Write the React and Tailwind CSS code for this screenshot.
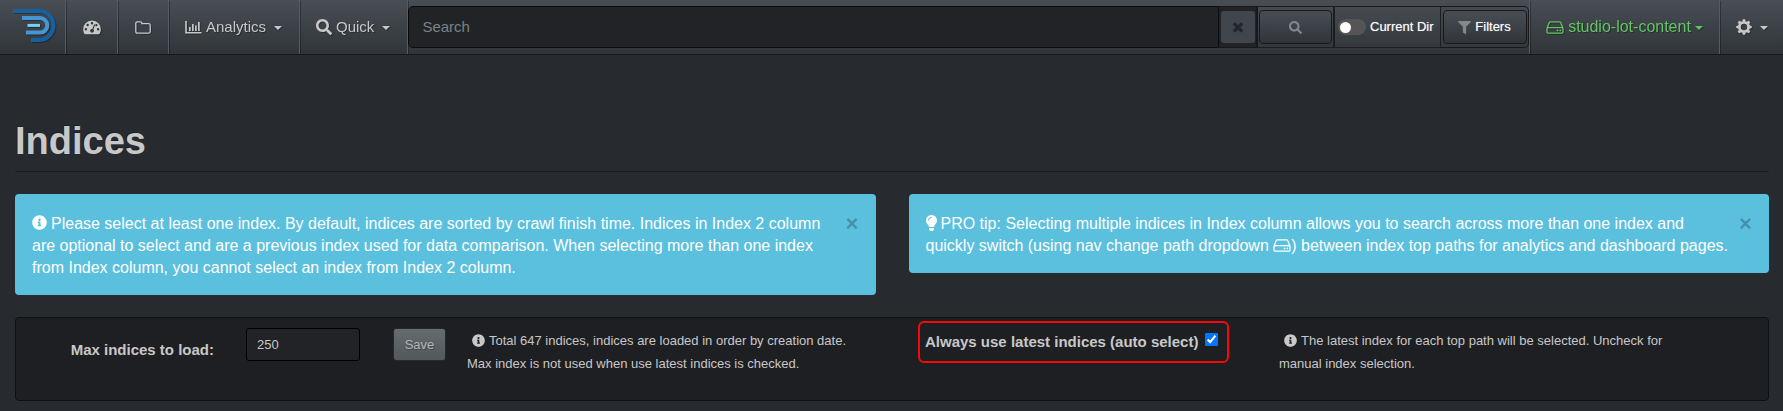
import { FaSearch, FaFilter, FaInfoCircle, FaLightbulb, FaTimes } from 'react-icons/fa';

function Logo() {
  return (
    <svg viewBox="0 0 44 35" className="h-[35px] w-[44px]" fill="none" aria-hidden="true">
      <path d="M0 3H26a14.5 14.5 0 0 1 0 29H18" stroke="#1660a0" strokeWidth="4" />
      <path d="M9 10H27a7.3 7.3 0 0 1 0 14.6H13" stroke="#4596d4" strokeWidth="4" />
      <path d="M14.500 17.400H27" stroke="#78cef8" strokeWidth="3" />
    </svg>
  );
}

function GaugeIcon() {
  return (
    <svg viewBox="0 0 18 15" className="h-[15px] w-[18px]" aria-hidden="true">
      <path
        fill="currentColor"
        fillRule="evenodd"
        d="M9 .5a8.800 8.800 0 0 1 8.800 8.800c0 1.700-.4 3.200-1.200 4.500-.2.300-.4.400-.7.400H2.100c-.3 0-.5-.1-.7-.4A8.800 8.800 0 0 1 .2 9.300 8.800 8.800 0 0 1 9 .5zM9 2a1.200 1.200 0 1 0 0 2.400A1.200 1.200 0 0 0 9 2zM4.700 3.800a1.200 1.200 0 1 0 0 2.400 1.200 1.200 0 0 0 0-2.400zM2.900 8.100a1.200 1.200 0 1 0 0 2.400 1.200 1.200 0 0 0 0-2.400zM15.100 8.100a1.200 1.200 0 1 0 0 2.400 1.200 1.200 0 0 0 0-2.400zM13.400 3.900a1.200 1.200 0 0 0-1.200 1.200 1.200 1.200 0 0 0 1.600 1.100 1.200 1.200 0 0 0-.4-2.300zM11.100 4.500l-1.700 4.600a2 2 0 0 0-2.300 1.700 2 2 0 0 0 3.900.5 2 2 0 0 0-.6-1.800l1.700-4.700z"
      />
    </svg>
  );
}

function FolderIcon() {
  return (
    <svg viewBox="0 0 16 13" className="h-[13px] w-[16px]" fill="none" stroke="currentColor" strokeWidth="1.300" aria-hidden="true">
      <path d="M.8 2.300A1.500 1.500 0 0 1 2.300.8h3a1.500 1.500 0 0 1 1.500 1.500v.4h6.900a1.500 1.500 0 0 1 1.500 1.500v6.500a1.500 1.500 0 0 1-1.500 1.500H2.300a1.500 1.500 0 0 1-1.500-1.500z" />
    </svg>
  );
}

function ChartIcon() {
  return (
    <svg viewBox="0 0 17 13" className="h-[13px] w-[17px]" fill="currentColor" aria-hidden="true">
      <path d="M.2 0h1.600v11h14.700v1.600H.2zM4 6h1.700v4H4zM7 3h1.700v7H7zM10 4.500h1.700V10H10zM13 1h1.700v9H13z" />
    </svg>
  );
}

function DriveIcon({ className = '' }) {
  return (
    <svg viewBox="0 0 18 13" className={`h-[13px] w-[18px] ${className}`} fill="none" aria-hidden="true">
      <path
        stroke="currentColor"
        strokeWidth="1.300"
        strokeLinejoin="round"
        d="M1 7.200 3.300 1.600Q3.600.8 4.500.8h9q.9 0 1.200.8L17 7.200v3.700q0 1.200-1.200 1.200H2.200Q1 12.100 1 10.900zM1.100 7.200q.3-.6 1.100-.6h13.600q.8 0 1.100.6"
      />
      <circle cx="11.500" cy="9.400" r=".9" fill="currentColor" />
      <circle cx="14.300" cy="9.400" r=".9" fill="currentColor" />
    </svg>
  );
}

function GearIcon() {
  return (
    <svg viewBox="-8 -8 16 16" className="h-[16px] w-[16px]" aria-hidden="true">
      <circle r="4.600" fill="none" stroke="currentColor" strokeWidth="2.800" />
      <g fill="currentColor">
        {[0, 45, 90, 135, 180, 225, 270, 315].map((angle) => (
          <path key={angle} transform={`rotate(${angle})`} d="M-1.800-5.200-1.100-7.700H1.100L1.800-5.200z" />
        ))}
      </g>
    </svg>
  );
}

function Caret() {
  return <span aria-hidden="true" className="mt-[2px] border-x-4 border-t-4 border-x-transparent border-t-current" />;
}

const navItem =
  'flex items-center border-r border-[#565b61] text-[#c8c8c8] [filter:drop-shadow(1px_1px_0_rgba(0,0,0,0.3))]';
const navGradient = 'bg-linear-to-b from-[#484e55] via-[#3a3f44] via-60% to-[#313539]';

function Navbar() {
  return (
    <nav className={`flex h-[55px] border-b border-[#17191b] text-[15px] ${navGradient}`}>
      <a href="#home" aria-label="Home" className={`${navItem} w-[66px] pb-1 pl-[13px]`}>
        <Logo />
      </a>
      <a href="#dashboard" aria-label="Dashboard" className={`${navItem} w-[52px] justify-center`}>
        <GaugeIcon />
      </a>
      <a href="#files" aria-label="Files" className={`${navItem} w-[51px] justify-center`}>
        <FolderIcon />
      </a>
      <button type="button" className={`${navItem} gap-1 pr-[17px] pl-4`}>
        <ChartIcon />
        <span className="pr-1">Analytics</span>
        <Caret />
      </button>
      <button type="button" className={`${navItem} gap-1 pr-[17px] pl-4`}>
        <FaSearch className="h-4 w-4" />
        <span className="pr-1">Quick</span>
        <Caret />
      </button>
      <form className="my-[6px] flex min-w-0 flex-1" onSubmit={(e) => e.preventDefault()}>
        <input
          type="text"
          aria-label="Search"
          placeholder="Search"
          className="min-w-0 flex-1 rounded-l-[5px] border border-[#0b0c0d] bg-[#222326] px-[13px] text-[15px] text-[#c8c8c8] placeholder:text-[#7a8288]"
        />
        <div className="flex w-[39px] items-center justify-center border-y border-r-2 border-[#17191b] bg-[#222326]">
          <button type="button" aria-label="Clear search" className="flex h-[32px] w-[34px] items-center justify-center rounded-[3px] bg-[#41464c] text-[#24272a]">
            <FaTimes className="h-[13px] w-[12px]" stroke="currentColor" strokeWidth="40" />
          </button>
        </div>
        <div className="flex w-[77px] items-center justify-center border-y border-r-2 border-[#1c1e20]">
          <button type="submit" aria-label="Search" className={`flex h-[34px] w-[73px] items-center justify-center rounded-[4px] border border-[#17191b] text-[13px] text-[#85888b] ${navGradient}`}>
            <FaSearch />
          </button>
        </div>
        <label className="flex w-[106px] items-center gap-1 border-y border-r border-[#1c1e20] pl-[3px] text-[13px] whitespace-nowrap text-white [text-shadow:0_0_1px_rgba(255,255,255,0.5)]">
          <span className="relative flex items-center">
            <input type="checkbox" className="peer h-[16px] w-[28px] appearance-none rounded-full bg-[#555]" />
            <span className="pointer-events-none absolute left-[2px] h-[11px] w-[11px] rounded-full bg-white peer-checked:left-[15px]" />
          </span>
          Current Dir
        </label>
        <div className="flex w-[88px] items-center justify-center rounded-r-[5px] border-y border-r border-[#17191b]">
          <button type="button" className={`flex h-[34px] w-[84px] items-center justify-center gap-1 rounded-[4px] border border-[#17191b] text-[13px] text-white [text-shadow:0_0_1px_rgba(255,255,255,0.5)] ${navGradient}`}>
            <FaFilter className="text-[#85888b]" />
            Filters
          </button>
        </div>
      </form>
      <button type="button" className="flex w-[191px] items-center justify-center gap-1 border-x border-[#565b61] text-[16px] text-[#62c462] [filter:drop-shadow(1px_1px_0_rgba(0,0,0,0.3))]">
        <DriveIcon />
        <span>studio-lot-content</span>
        <Caret />
      </button>
      <button type="button" aria-label="Settings" className="flex w-[63px] items-center justify-center gap-2 text-[#c8c8c8] [filter:drop-shadow(1px_1px_0_rgba(0,0,0,0.3))]">
        <GearIcon />
        <Caret />
      </button>
    </nav>
  );
}

function Alert({ children }) {
  return (
    <div role="alert" className="flex items-start justify-between gap-2 rounded-[4px] bg-[#5bc0de] px-[17px] pt-[19px] pb-[16px] text-[16px] leading-[22px] text-white">
      <p>{children}</p>
      <button type="button" aria-label="Close" className="w-[13px] shrink-0 text-center text-[22px] leading-[22px] font-bold text-black/25">
        ×
      </button>
    </div>
  );
}

export default function App() {
  return (
    <div className="min-h-screen bg-[#272b30] font-['Liberation_Sans',Arial,sans-serif] text-[#c8c8c8]">
      <Navbar />
      <main className="pt-[64px] pr-[14px] pl-[15px]">
        <h1 className="border-b border-[#1c1e20] pb-[8px] text-[38px] leading-[44px] font-bold [text-shadow:-1px_-1px_0_rgba(0,0,0,0.3)]">
          Indices
        </h1>
        <div className="mt-[22px] grid grid-cols-2 items-start gap-[33px]">
          <Alert>
            <FaInfoCircle className="mr-1 inline h-[15px] w-[15px] align-[-1px]" />
            Please select at least one index. By default, indices are sorted by crawl finish time. Indices in Index 2
            column are optional to select and are a previous index used for data comparison. When selecting more than
            one index from Index column, you cannot select an index from Index 2 column.
          </Alert>
          <Alert>
            <FaLightbulb className="mr-1 inline h-[16px] w-[11px] align-[-2px]" />
            PRO tip: Selecting multiple indices in Index column allows you to search across more than one index and
            <br />
            quickly switch (using nav change path dropdown <DriveIcon className="inline align-[-1px]" />) between index
            top paths for analytics and dashboard pages.
          </Alert>
        </div>
        <section className="mt-[22px] grid h-[84px] grid-cols-[3fr_2fr_1fr_6fr_5fr_7fr] items-start rounded-[4px] border border-[#0e1012] bg-[#1e1f23] text-[13px] leading-[23px]">
          <label htmlFor="max-indices" className="pt-[20px] pr-[21px] text-right text-[15px] font-bold">
            Max indices to load:
          </label>
          <div className="pt-[10px] pl-[11px]">
            <input
              id="max-indices"
              type="text"
              defaultValue="250"
              className="h-[33px] w-[114px] rounded-[3px] border border-black bg-[#222326] px-[10px] text-[13px]"
            />
          </div>
          <div className="pt-[10px] pl-[12px]">
            <button type="button" className="h-[33px] w-[53px] rounded-[3px] border border-[#27292d] bg-linear-to-b from-[#666b70] to-[#53585d] text-[13px] text-[#b4b6b8] [text-shadow:1px_1px_1px_rgba(0,0,0,0.3)]">
              Save
            </button>
          </div>
          <p className="pt-[11px] pr-8 pl-[13px]">
            <FaInfoCircle className="mr-1 ml-[5px] inline align-[-2px]" />
            Total 647 indices, indices are loaded in order by creation date. Max index is not used when use latest
            indices is checked.
          </p>
          <div className="flex pt-[3px] pl-[26px]">
            <label className="flex h-[42px] items-start gap-[7px] rounded-[6px] border-2 border-[#f90808] px-[5px] pt-[7px] text-[15px] font-bold whitespace-nowrap">
              Always use latest indices (auto select)
              <input type="checkbox" defaultChecked className="mt-[3px] mr-1 h-[13px] w-[13px] accent-[#0075ff]" />
            </label>
          </div>
          <p className="pt-[11px] pr-20 pl-[22px]">
            <FaInfoCircle className="mr-1 ml-[5px] inline align-[-2px]" />
            The latest index for each top path will be selected. Uncheck for manual index selection.
          </p>
        </section>
      </main>
    </div>
  );
}
